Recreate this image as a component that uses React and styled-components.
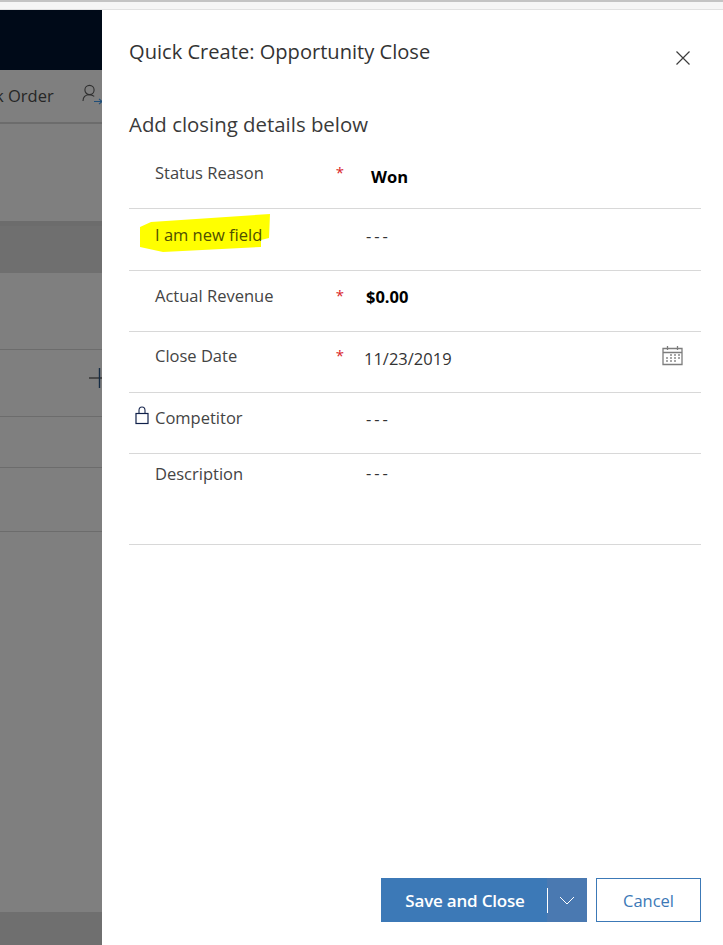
import React from 'react';
import styled, { createGlobalStyle } from 'styled-components';

const GlobalStyle = createGlobalStyle`
    html, body {
        margin: 0;
        padding: 0;
        background: #ffffff;
    }
    * {
        box-sizing: border-box;
    }
`;

const Page = styled.div`
    display: flex;
    flex-direction: column;
    width: 723px;
    height: 945px;
    overflow: hidden;
    font-family: 'Open Sans', 'Noto Sans', sans-serif;
`;

const BrowserStrip = styled.div`
    flex: none;
    height: 10px;
    background: #f6f6f6;
    border-top: 2px solid #c4c4c4;
    box-shadow: inset 0 -1px 0 #e2e2e2;
`;

const Body = styled.div`
    flex: 1;
    display: flex;
    min-height: 0;
`;

const Backdrop = styled.div`
    position: relative;
    flex: none;
    width: 102px;
    display: flex;
    flex-direction: column;
    background: #7f7f7f;
`;

const Strip = styled.div`
    flex: none;
    height: ${(p) => p.$h}px;
    background: ${(p) => p.$bg || '#7f7f7f'};
    border-bottom: ${(p) => (p.$line ? `${p.$line}px solid #6c6c6c` : 'none')};
`;

const CommandBar = styled.div`
    flex: none;
    height: 54px;
    display: flex;
    justify-content: space-between;
    align-items: flex-start;
    padding-top: 14px;
    background: #7f7f7f;
    border-bottom: 2px solid #6c6c6c;
    color: #262626;
    font-size: 16.5px;
    line-height: 24px;
    overflow: hidden;
`;

const OrderLabel = styled.span`
    margin-left: -5px;
    white-space: nowrap;
`;

const PersonIcon = styled.svg`
    display: block;
    width: 20px;
    height: 22px;
`;

const PlusIcon = styled.svg`
    position: absolute;
    right: 0;
    top: 358px;
    width: 13px;
    height: 20px;
`;

const Panel = styled.section`
    flex: 1;
    display: flex;
    flex-direction: column;
    background: #ffffff;
    padding: 0 22px 23px 27px;
    min-width: 0;
`;

const TitleRow = styled.header`
    flex: none;
    display: flex;
    justify-content: space-between;
    height: 88px;
    padding-top: 27px;
`;

const Title = styled.h1`
    margin: 0;
    font-size: 20.1px;
    font-weight: 400;
    line-height: 30px;
    color: #333333;
`;

const CloseIcon = styled.svg`
    display: block;
    width: 14px;
    height: 14px;
    margin: 14px 11px 0 0;
`;

const Subtitle = styled.h2`
    flex: none;
    margin: 0;
    font-size: 20.4px;
    font-weight: 400;
    line-height: 30px;
    height: 49px;
    padding-top: 11px;
    color: #3a3a3a;
`;

const FieldList = styled.div`
    flex: 1;
    display: flex;
    flex-direction: column;
`;

const Field = styled.div`
    position: relative;
    flex: none;
    display: grid;
    grid-template-columns: 26px 211px 1fr;
    height: ${(p) => p.$h}px;
    padding-top: ${(p) => p.$pad}px;
    border-bottom: 1px solid #d8d8d8;
`;

const LockSlot = styled.div`
    display: flex;
    align-items: flex-start;
    padding: 0 0 0 6px;
`;

const LockIcon = styled.svg`
    display: block;
    width: 16px;
    height: 19px;
`;

const Label = styled.div`
    position: relative;
    display: flex;
    font-size: 16.5px;
    line-height: 24px;
    color: ${(p) => (p.$marked ? '#4f5000' : '#444444')};
    white-space: nowrap;
`;

const Highlight = styled.svg`
    position: absolute;
    left: 11px;
    top: 4px;
    width: 132px;
    height: 40px;
`;

const LabelText = styled.span`
    position: relative;
    z-index: 1;
`;

const Required = styled.span`
    margin-left: auto;
    padding: 1px 22px 0 0;
    color: #d9242a;
    font-size: 15px;
    line-height: 20px;
`;

const Value = styled.div`
    display: flex;
    align-items: flex-start;
    justify-content: space-between;
    padding: 1px 18px 0 0;
    margin-left: ${(p) => p.$indent || 0}px;
    margin-top: ${(p) => p.$drop || 0}px;
    font-size: 16.5px;
    line-height: 24px;
    font-weight: ${(p) => (p.$bold ? 700 : 400)};
    letter-spacing: ${(p) => (p.$spaced ? '3px' : 'normal')};
    color: ${(p) => (p.$bold ? '#000000' : '#333333')};
`;

const CalendarIcon = styled.svg`
    display: block;
    width: 21px;
    height: 21px;
    margin-top: -2px;
`;

const Footer = styled.footer`
    flex: none;
    display: flex;
    justify-content: flex-end;
    gap: 9px;
`;

const SplitButton = styled.div`
    display: flex;
    width: 206px;
    height: 44px;
    background: #3c79b7;
`;

const SaveButton = styled.button`
    flex: 1;
    border: 0;
    padding: 0 0 0 2px;
    background: transparent;
    color: #ffffff;
    font-family: inherit;
    font-size: 17px;
    font-weight: 600;
    letter-spacing: -0.2px;
`;

const ArrowButton = styled.button`
    flex: none;
    display: flex;
    align-items: center;
    justify-content: center;
    width: 40px;
    position: relative;
    border: 0;
    padding: 0;
    background: #4a79b1;

    &::before {
        content: '';
        position: absolute;
        left: 0;
        top: 10px;
        bottom: 9px;
        width: 1px;
        background: #ffffff;
    }
`;

const CancelButton = styled.button`
    width: 105px;
    height: 44px;
    border: 1px solid #3c79b7;
    background: #ffffff;
    color: #3c79b7;
    font-family: inherit;
    font-size: 16.5px;
    font-weight: 400;
`;

const fields = [
    { label: 'Status Reason', required: true, value: 'Won', bold: true, indent: 5, drop: 3, h: 62, pad: 14 },
    { label: 'I am new field', value: '---', h: 62, pad: 14, highlighted: true },
    { label: 'Actual Revenue', required: true, value: '$0.00', bold: true, h: 61, pad: 13 },
    { label: 'Close Date', required: true, value: '11/23/2019', indent: -2, drop: 2, h: 61, pad: 12, date: true },
    { label: 'Competitor', value: '---', h: 61, pad: 13, locked: true },
    { label: 'Description', value: '---', drop: -2, h: 91, pad: 8 },
];

function App() {
    return (
        <Page>
            <GlobalStyle />
            <BrowserStrip />
            <Body>
                <Backdrop>
                    <Strip $h={60} $bg="#000a18" />
                    <CommandBar>
                        <OrderLabel>k Order</OrderLabel>
                        <PersonIcon viewBox="0 0 20 22" fill="none">
                            <circle cx="7.5" cy="6" r="4.6" stroke="#2f2f2f" strokeWidth="1.1" />
                            <path d="M1 17c0-4 2.6-6.3 6.5-6.3 2 0 3.6.6 4.7 1.7" stroke="#2f2f2f" strokeWidth="1.1" />
                            <path d="M12 17.5h8M17 14.8l3 2.7-3 2.7" stroke="#1f4e79" strokeWidth="1.1" />
                        </PersonIcon>
                    </CommandBar>
                    <Strip $h={102} $line={5} />
                    <Strip $h={47} $bg="#6f6f6f" />
                    <Strip $h={77} $line={1} />
                    <Strip $h={67} $line={1} />
                    <Strip $h={51} $line={1} />
                    <Strip $h={64} $line={1} />
                    <Strip $h={380} />
                    <Strip $h={33} $bg="#6f6f6f" />
                    <PlusIcon viewBox="0 0 13 20" fill="none">
                        <path d="M0 10h13" stroke="#262626" strokeWidth="1.2" />
                        <path d="M10.5 0v20" stroke="#152c44" strokeWidth="1.4" />
                    </PlusIcon>
                </Backdrop>
                <Panel>
                    <TitleRow>
                        <Title>Quick Create: Opportunity Close</Title>
                        <CloseIcon viewBox="0 0 14 14" fill="none">
                            <path d="M.5.5l13 13M13.5.5l-13 13" stroke="#3d3d3d" strokeWidth="1.2" />
                        </CloseIcon>
                    </TitleRow>
                    <Subtitle>Add closing details below</Subtitle>
                    <FieldList>
                        {fields.map((field) => (
                            <Field key={field.label} $h={field.h} $pad={field.pad}>
                                {field.highlighted && (
                                    <Highlight viewBox="0 0 132 40">
                                        <path d="M0 14 L11 9 L130 1 L129 25 L121 27 L121 34 L23 39 L0 34Z" fill="#ffff00" />
                                    </Highlight>
                                )}
                                <LockSlot>
                                    {field.locked && (
                                        <LockIcon viewBox="0 0 16 19" fill="none">
                                            <path d="M4 7.5V4.5a3 3.5 0 0 1 6 0v3" stroke="#1b2a52" strokeWidth="1.1" />
                                            <rect x="1" y="7.5" width="12" height="10" stroke="#10204a" strokeWidth="1.2" />
                                        </LockIcon>
                                    )}
                                </LockSlot>
                                <Label $marked={field.highlighted}>
                                    <LabelText>{field.label}</LabelText>
                                    {field.required && <Required>*</Required>}
                                </Label>
                                <Value
                                    $bold={field.bold}
                                    $indent={field.indent}
                                    $drop={field.drop}
                                    $spaced={field.value === '---'}
                                >
                                    <span>{field.value}</span>
                                    {field.date && (
                                        <CalendarIcon viewBox="0 0 21 21" fill="none">
                                            <path d="M1 3.5h19v16H1zM1 7.5h19" stroke="#7d7d7d" strokeWidth="1.3" />
                                            <path d="M5.5 1v4M15.5 1v4" stroke="#7d7d7d" strokeWidth="1.3" />
                                            <path d="M8 10h2M12 10h2M16 10h2M4 13h2M8 13h2M12 13h2M16 13h2M4 16h2M8 16h2M12 16h2" stroke="#8a8a8a" strokeWidth="1.5" />
                                        </CalendarIcon>
                                    )}
                                </Value>
                            </Field>
                        ))}
                    </FieldList>
                    <Footer>
                        <SplitButton>
                            <SaveButton>Save and Close</SaveButton>
                            <ArrowButton>
                                <svg width="16" height="9" viewBox="0 0 16 9" fill="none">
                                    <path d="M1 1l7 7 7-7" stroke="#ffffff" strokeWidth="1" />
                                </svg>
                            </ArrowButton>
                        </SplitButton>
                        <CancelButton>Cancel</CancelButton>
                    </Footer>
                </Panel>
            </Body>
        </Page>
    );
}

export default App;
